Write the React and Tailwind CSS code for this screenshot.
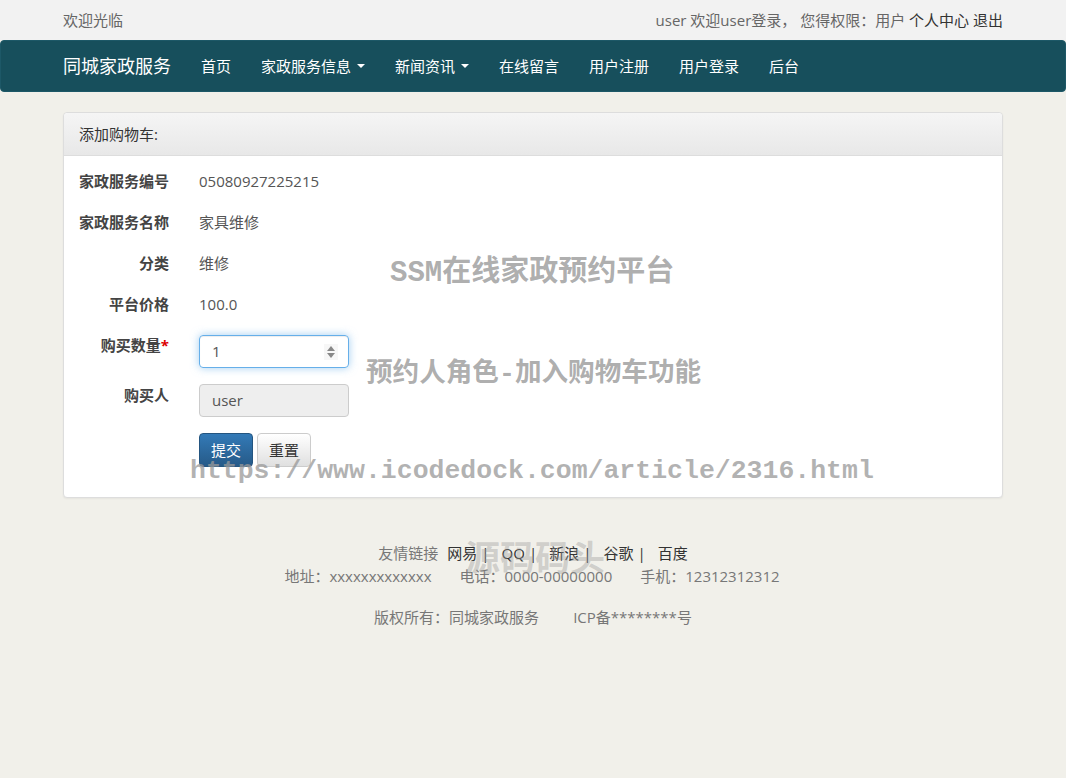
import { useState } from "react";

const FONT = { fontFamily: '"Open Sans", "Noto Sans CJK SC", sans-serif' };
const MARK = { fontFamily: '"Liberation Mono", "Noto Sans CJK SC", monospace' };

function Caret() {
  return <span className="inline-block ml-[6px] align-middle border-t-[4px] border-x-[4px] border-x-transparent border-t-white" />;
}

function Row({ label, children, required }) {
  return (
    <div className="flex h-[41px]">
      <div className="w-[105px] pr-[15px] text-right font-bold text-[#444] leading-5">
        {label}
        {required && <span className="text-[#d00]">*</span>}
      </div>
      <div className="pl-[15px] text-[#555] leading-5">{children}</div>
    </div>
  );
}

export default function App() {
  const [qty, setQty] = useState(1);
  const nav = [
    { t: "首页" },
    { t: "家政服务信息", caret: true },
    { t: "新闻资讯", caret: true },
    { t: "在线留言" },
    { t: "用户注册" },
    { t: "用户登录" },
    { t: "后台" },
  ];
  const links = ["网易", "QQ", "新浪", "谷歌"];

  return (
    <div className="relative min-h-[778px] bg-[#f1f0ea] text-[15px]" style={FONT}>
      {/* top bar */}
      <div className="bg-[#f2f2f2] h-[40px]">
        <div className="w-[940px] mx-auto flex items-center justify-between h-full text-[#666]">
          <span>欢迎光临</span>
          <span>
            user 欢迎user登录， 您得权限：用户 <span className="text-[#333]">个人中心</span> <span className="text-[#333]">退出</span>
          </span>
        </div>
      </div>

      {/* navbar */}
      <div className="bg-[#174f5c] h-[52px] rounded-[4px] border border-[#1d5867]">
        <div className="w-[940px] mx-auto flex items-center h-full">
          <span className="text-white text-[18px] pr-[15px]">同城家政服务</span>
          {nav.map((n) => (
            <span key={n.t} className="text-white px-[15px] flex items-center">
              {n.t}
              {n.caret && <Caret />}
            </span>
          ))}
        </div>
      </div>

      {/* panel */}
      <div className="w-[940px] mx-auto mt-[20px] bg-white border border-[#ddd] rounded-[4px] shadow-[0_1px_2px_rgba(0,0,0,0.05)]">
        <div className="h-[43px] px-[15px] flex items-center text-[#333] bg-gradient-to-b from-[#f5f5f5] to-[#e8e8e8] border-b border-[#ddd] rounded-t-[4px]">
          添加购物车:
        </div>
        <div className="p-[15px]">
          <Row label="家政服务编号">05080927225215</Row>
          <Row label="家政服务名称">家具维修</Row>
          <Row label="分类">维修</Row>
          <Row label="平台价格">100.0</Row>
          <div className="flex mb-[16px]">
            <div className="w-[105px] pr-[15px] text-right font-bold text-[#444] leading-5">
              购买数量<span className="text-[#d00]">*</span>
            </div>
            <div className="pl-[15px]">
              <div className="w-[150px] h-[33px] border border-[#66afe9] rounded-[4px] shadow-[inset_0_1px_1px_rgba(0,0,0,0.075),0_0_8px_rgba(102,175,233,0.6)] flex items-center pl-[12px] pr-[10px]">
                <span className="flex-1 text-[#555]">{qty}</span>
                <span className="flex flex-col items-center gap-[2px] bg-[#f7f7f7] px-[3px] py-[2px]" onClick={() => setQty(qty + 1)}>
                  <span className="border-b-[5px] border-x-[4px] border-x-transparent border-b-[#888]" />
                  <span className="border-t-[5px] border-x-[4px] border-x-transparent border-t-[#888]" />
                </span>
              </div>
            </div>
          </div>
          <div className="flex mb-[16px]">
            <div className="w-[105px] pr-[15px] text-right font-bold text-[#444] leading-5 pt-[1px]">购买人</div>
            <div className="pl-[15px]">
              <div className="w-[150px] h-[33px] border border-[#ccc] rounded-[4px] bg-[#eee] flex items-center pl-[12px] text-[#555]">
                user
              </div>
            </div>
          </div>
          <div className="flex pl-[120px] gap-[4px] mb-[15px]">
            <button className="h-[34px] px-[11px] rounded-[4px] text-white bg-gradient-to-b from-[#337ab7] to-[#265a88] border border-[#245580]">
              提交
            </button>
            <button className="h-[34px] px-[11px] rounded-[4px] text-[#333] bg-gradient-to-b from-white to-[#e0e0e0] border border-[#ccc]">
              重置
            </button>
          </div>
        </div>
      </div>

      {/* footer */}
      <div className="mt-[44px] text-center text-[#777] leading-[23px]">
        <div className="flex justify-center">
          <span className="mr-[9px]">友情链接</span>
          {links.map((l) => (
            <span key={l} className="text-[#333] mr-[12px]">
              {l}
              <span className="ml-[4px]">|</span>
            </span>
          ))}
          <span className="text-[#333]">百度</span>
        </div>
        <div className="flex justify-center gap-[28px] ml-[-2px]">
          <span>地址：xxxxxxxxxxxxx</span>
          <span>电话：0000-00000000</span>
          <span>手机：12312312312</span>
        </div>
        <div className="mt-[18px] flex justify-center gap-[34px]">
          <span>版权所有：同城家政服务</span>
          <span>ICP备********号</span>
        </div>
      </div>

      {/* watermarks */}
      <div className="absolute left-[390px] top-[252px] text-[29px] font-bold text-[#999]/80 whitespace-nowrap" style={MARK}>
        SSM在线家政预约平台
      </div>
      <div className="absolute left-[366px] top-[355px] text-[26.6px] font-bold text-[#999]/80 whitespace-nowrap" style={MARK}>
        预约人角色-加入购物车功能
      </div>
      <div className="absolute left-[190px] top-[452px] text-[26.5px] font-bold text-[#999]/75 whitespace-nowrap" style={MARK}>
        https://www.icodedock.com/article/2316.html
      </div>
      <div className="absolute left-[465px] top-[536px] text-[35px] font-bold text-[#999]/40 whitespace-nowrap" style={MARK}>
        源码码头
      </div>
    </div>
  );
}
